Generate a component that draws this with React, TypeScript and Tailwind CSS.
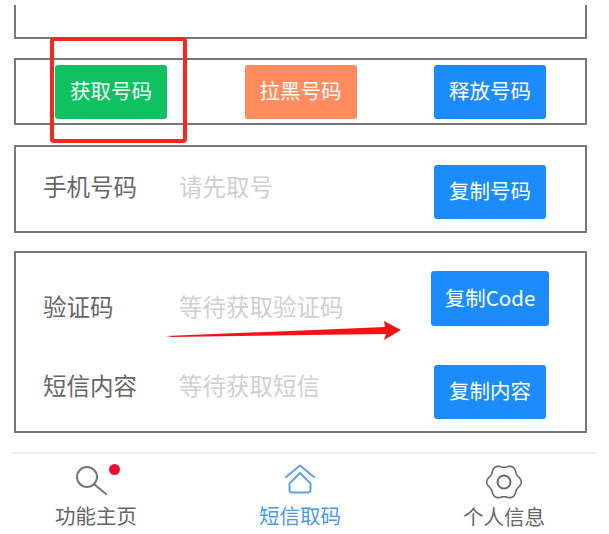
import React from "react";

const boxCls = "border-2 border-[#777777] bg-white";
const btnCls =
  "flex h-[54px] w-[112px] shrink-0 items-center justify-center rounded-[3px] pb-[3px] text-[20.5px] text-white";
const labelCls = "text-[23.5px] leading-[30px] text-[#666666]";
const placeholderCls = "text-[23.5px] leading-[30px] text-[#cfcfcf]";

// gear outline: six soft lobes round the centre
const gearPath = (() => {
  const pts: string[] = [];
  for (let i = 0; i < 120; i++) {
    const a = (i / 120) * Math.PI * 2;
    const r = 16 + 1.3 * Math.cos(6 * a);
    pts.push(`${(19 + r * Math.cos(a)).toFixed(2)} ${(19 + r * Math.sin(a)).toFixed(2)}`);
  }
  return `M${pts.join(" L")} Z`;
})();

export default function App() {
  return (
    <div
      className="relative h-[534px] w-[609px] overflow-hidden bg-white"
      style={{ fontFamily: '"Noto Sans CJK SC", "Noto Sans", sans-serif' }}
    >
      <div className="flex flex-col pl-[14px] pt-[5px]">
        {/* cropped box on top */}
        <div className="h-[34px] w-[573px] border-x-2 border-b-2 border-[#777777]" />

        <div className={`${boxCls} mt-[19px] flex h-[67px] w-[573px] justify-between px-[39px] pt-[5px]`}>
          <div className={`${btnCls} bg-[#0fc25f]`}>获取号码</div>
          <div className={`${btnCls} bg-[#fe8c5f]`}>拉黑号码</div>
          <div className={`${btnCls} bg-[#1c8bfb]`}>释放号码</div>
        </div>

        <div className={`${boxCls} mt-[20px] flex h-[88px] w-[573px] items-start pl-[27px] pr-[39px] pt-[18px]`}>
          <div className={`${labelCls} mt-[6px] w-[136px]`}>手机号码</div>
          <div className={`${placeholderCls} mt-[6px] flex-1`}>请先取号</div>
          <div className={`${btnCls} bg-[#1c8bfb]`}>复制号码</div>
        </div>

        <div className={`${boxCls} mt-[18px] flex h-[182px] w-[573px] flex-col pl-[27px] pt-[18px]`}>
          <div className="flex items-start pr-[36px]">
            <div className={`${labelCls} mt-[20px] w-[136px]`}>验证码</div>
            <div className={`${placeholderCls} mt-[20px] flex-1`}>等待获取验证码</div>
            <div className="flex h-[55px] w-[118px] items-center justify-center rounded-[3px] bg-[#1c8bfb] pb-[3px] text-[20.5px] text-white">
              复制Code
            </div>
          </div>
          <div className="mt-[39px] flex items-start pr-[39px]">
            <div className={`${labelCls} mt-[5px] w-[136px]`}>短信内容</div>
            <div className={`${placeholderCls} mt-[5px] flex-1`}>等待获取短信</div>
            <div className={`${btnCls} bg-[#1c8bfb]`}>复制内容</div>
          </div>
        </div>
      </div>

      {/* bottom tabs */}
      <div className="ml-[11px] mt-[19px] flex w-[585px] border-t-2 border-[#eeeeee]">
        <div className="flex w-[170px] flex-col items-center pt-[10px]">
          <div className="relative h-[35px] w-[40px]">
            <svg viewBox="0 0 40 35" className="h-[35px] w-[40px]" fill="none" stroke="#777777" strokeWidth="2">
              <circle cx="11" cy="13" r="10" />
              <path d="M18.5 20.5 L30 30" strokeLinecap="round" />
            </svg>
            <span className="absolute left-[33px] top-0 h-[11px] w-[11px] rounded-full bg-[#ee1133]" />
          </div>
          <div className="mt-[2px] text-[20.5px] leading-[28px] text-[#666666]">功能主页</div>
        </div>
        <div className="flex w-[238px] flex-col items-center pt-[10px]">
          <svg viewBox="0 0 30 35" className="h-[35px] w-[30px]" fill="none" stroke="#5ba3f2" strokeWidth="2" strokeLinecap="round" strokeLinejoin="round">
            <path d="M1 13 L15 1.5 L29 13" />
            <path d="M15 9 L4.5 19.5 V26 Q4.5 28.5 7 28.5 H23 Q25.5 28.5 25.5 26 V19.5 Z" />
          </svg>
          <div className="mt-[2px] text-[20.5px] leading-[28px] text-[#4a97f0]">短信取码</div>
        </div>
        <div className="flex w-[170px] flex-col items-center pt-[10px]">
          <svg viewBox="0 0 38 38" className="-mb-[1px] -mt-[1px] h-[38px] w-[38px]" fill="none" stroke="#6a6a6a" strokeWidth="1.6">
            <path d={gearPath} strokeLinejoin="round" />
            <circle cx="19" cy="19" r="6.5" strokeWidth="2" />
          </svg>
          <div className="mt-[2px] text-[20.5px] leading-[28px] text-[#666666]">个人信息</div>
        </div>
      </div>

      {/* red highlight over the first button */}
      <div className="absolute left-[50px] top-[37px] h-[106px] w-[137px] rounded-[4px] border-[4px] border-[#f5281e]" />

      {/* red arrow */}
      <svg viewBox="0 0 609 534" className="pointer-events-none absolute left-0 top-0 h-[534px] w-[609px]">
        <path d="M166 336 L385 327 L384 321 L401 330 L384 340 L386 334 L172 337 Z" fill="#f01414" />
      </svg>
    </div>
  );
}
